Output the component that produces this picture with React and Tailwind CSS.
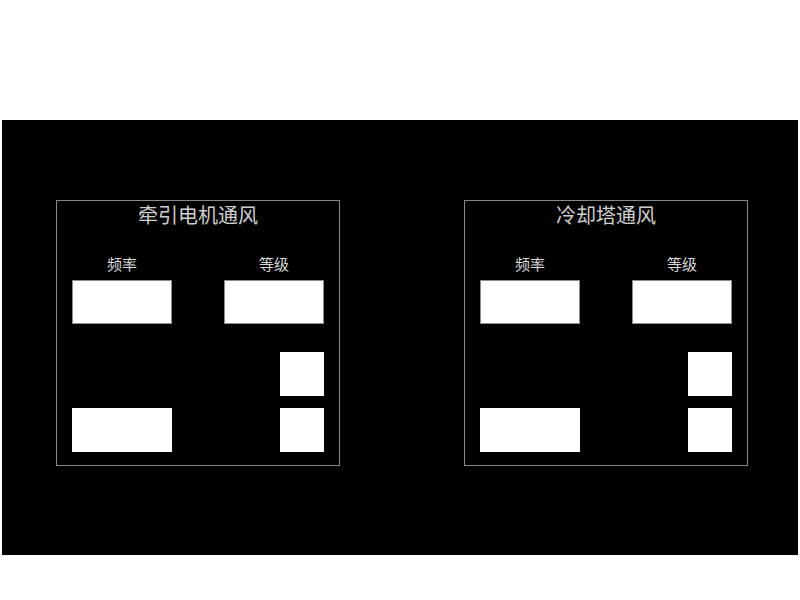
import React from 'react';

const panels = [
  { title: '牵引电机通风' },
  { title: '冷却塔通风' },
];

function Panel({ title }) {
  return (
    <div className="w-[284px] h-[266px] border border-[#888888] flex flex-col px-[15px]">
      <div className="h-[31px] leading-[28px] text-center text-[20px] text-[#cfcfcf]">{title}</div>
      <div className="h-[48px] flex items-end justify-between text-[15px] text-[#d8d8d8]">
        <div className="w-[100px] text-center leading-[20px] mb-[6px]">频率</div>
        <div className="w-[100px] text-center leading-[20px] mb-[6px]">等级</div>
      </div>
      <div className="flex justify-between">
        <div className="w-[100px] h-[44px] bg-white border border-[#8a8a8a]" />
        <div className="w-[100px] h-[44px] bg-white border border-[#8a8a8a]" />
      </div>
      <div className="flex justify-end mt-[28px]">
        <div className="w-[44px] h-[44px] bg-white" />
      </div>
      <div className="flex justify-between mt-[12px]">
        <div className="w-[100px] h-[44px] bg-white" />
        <div className="w-[44px] h-[44px] bg-white" />
      </div>
    </div>
  );
}

export default function App() {
  return (
    <div
      className="w-[800px] h-[600px] bg-white pt-[120px]"
      style={{ fontFamily: '"Noto Sans CJK SC", "Noto Sans", sans-serif' }}
    >
      <div className="mx-[2px] h-[435px] bg-black pt-[80px] pl-[54px] flex gap-[124px]">
        {panels.map((p) => (
          <Panel key={p.title} title={p.title} />
        ))}
      </div>
    </div>
  );
}
